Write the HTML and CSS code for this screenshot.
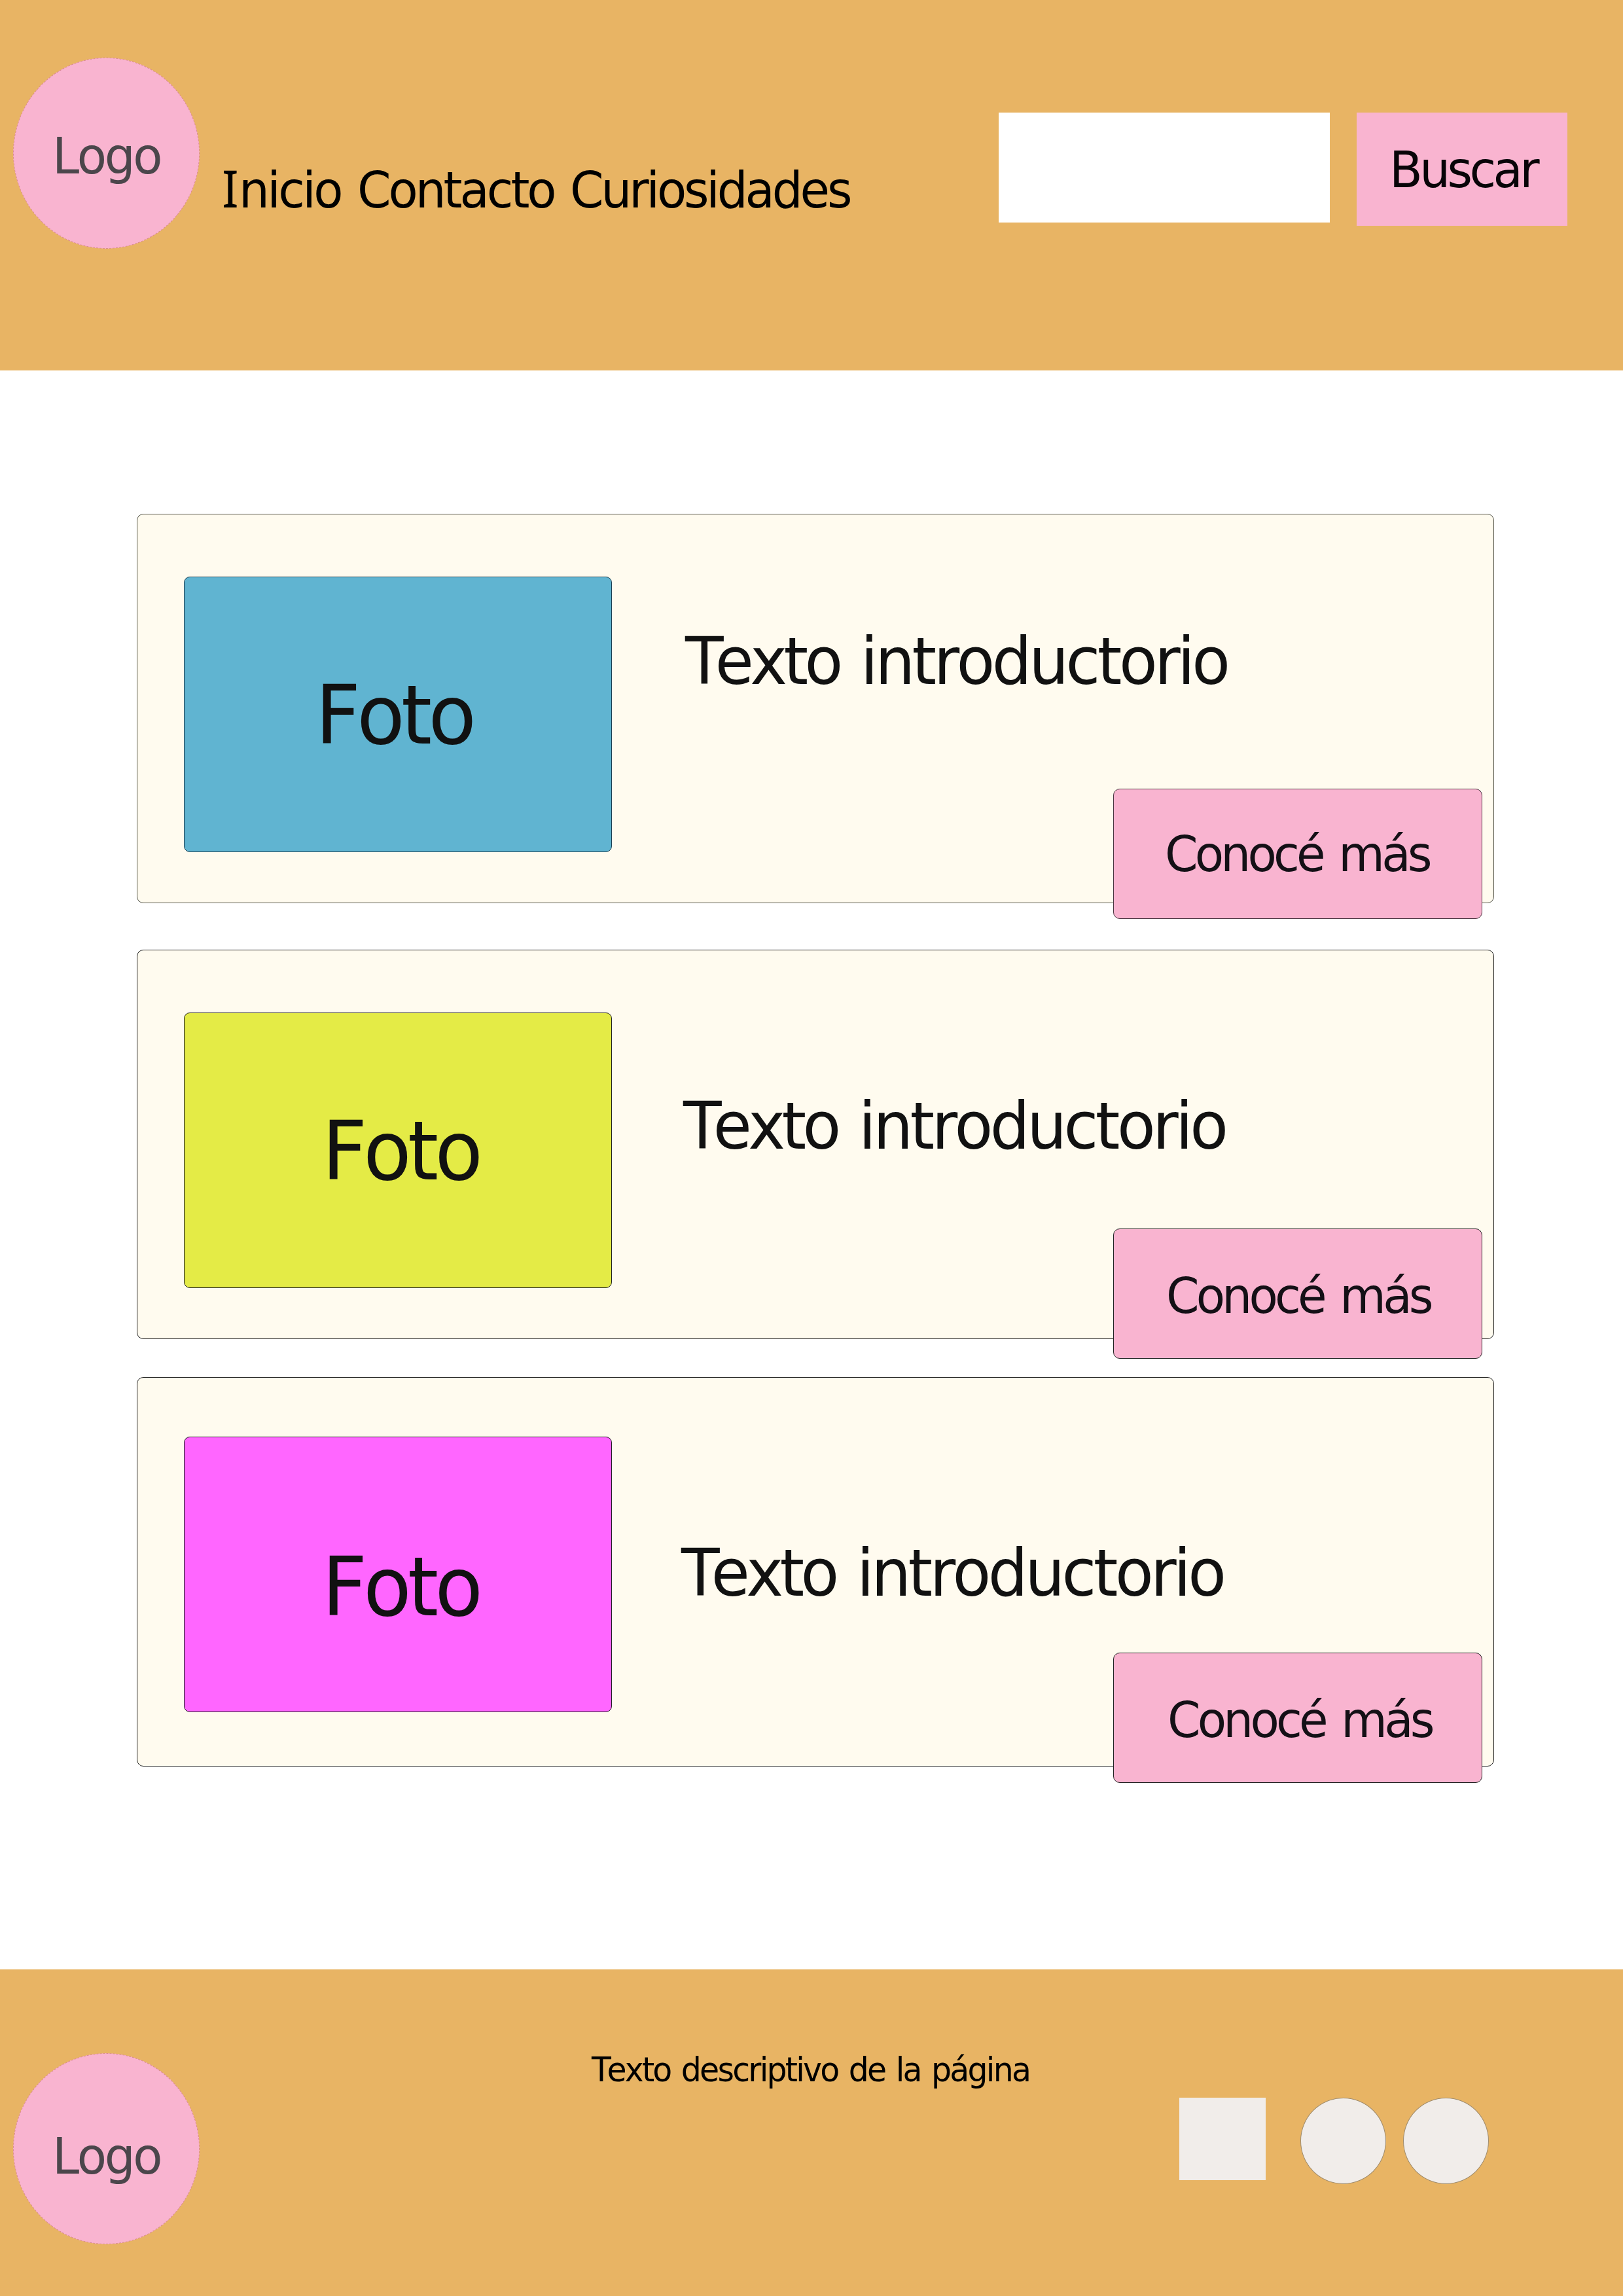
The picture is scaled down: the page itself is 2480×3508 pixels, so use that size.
FILE: index.html
```html
<!DOCTYPE html>
<html lang="es">
<head>
<meta charset="utf-8">
<title>Inicio</title>
<link rel="stylesheet" href="styles.css">
</head>
<body>
<header class="header">
  <div class="logo"><span class="narrow">Logo</span></div>
  <nav class="nav">
    <a class="nav-link nav-link-short narrow"><span class="serif-i">I</span>nicio</a>
    <a class="nav-link narrow">Contacto</a>
    <a class="nav-link nav-link-long narrow">Curiosidades</a>
  </nav>
  <form class="search">
    <input class="search-field" type="text" aria-label="Buscar">
    <button class="search-button" type="button"><span class="narrow">Buscar</span></button>
  </form>
</header>
<main class="main">
  <article class="card card-first">
    <div class="photo photo-blue"><span class="narrow">Foto</span></div>
    <p class="intro narrow"><span class="lead">Texto</span> introductorio</p>
    <a class="more"><span class="narrow">Conocé más</span></a>
  </article>
  <article class="card card-second">
    <div class="photo photo-yellow"><span class="narrow">Foto</span></div>
    <p class="intro narrow"><span class="lead">Texto</span> introductorio</p>
    <a class="more"><span class="narrow">Conocé más</span></a>
  </article>
  <article class="card card-third">
    <div class="photo photo-magenta"><span class="narrow">Foto</span></div>
    <p class="intro narrow"><span class="lead">Texto</span> introductorio</p>
    <a class="more"><span class="narrow">Conocé más</span></a>
  </article>
</main>
<footer class="footer">
  <div class="logo logo-footer"><span class="narrow">Logo</span></div>
  <p class="description narrow">Texto descriptivo de la página</p>
  <div class="social">
    <span class="social-square"></span>
    <span class="social-circle"></span>
    <span class="social-circle"></span>
  </div>
</footer>
</body>
</html>
```
FILE: styles.css
```css
* {
  box-sizing: border-box;
}

body {
  margin: 0;
  width: 2480px;
  height: 3508px;
  display: flex;
  flex-direction: column;
  background: #fff;
  color: #111;
  font-family: "DejaVu Sans", sans-serif;
  font-kerning: none;
  line-height: 1;
  white-space: nowrap;
}

p {
  margin: 0;
}

/* Slightly condensed lettering, used for every text on the page. */
.narrow {
  display: inline-block;
  transform: scaleX(0.96);
  transform-origin: left center;
}

.header {
  display: flex;
  align-items: flex-start;
  height: 566px;
  padding: 88px 85px 0 20px;
  background: #e8b464;
}

.logo {
  width: 285px;
  height: 292px;
  padding: 111px 0 0 59px;
  border: 1px dashed #d98a95;
  border-radius: 50%;
  background: #f9b4d0;
  color: #4b464b;
  font-size: 77px;
  letter-spacing: -3.5px;
}

.nav {
  display: flex;
  margin: 164px 0 0 34px;
  color: #000;
  font-size: 77px;
  letter-spacing: -4.2px;
}

.nav-link {
  width: 324.5px;
}

.nav-link-short {
  width: 207px;
  letter-spacing: -3.75px;
}

.nav-link-long {
  width: 430px;
  letter-spacing: -4.3px;
}

.serif-i {
  font-family: "Noto Sans", sans-serif;
  font-size: 79px;
  line-height: 0;
  letter-spacing: 0.4px;
}

.search {
  display: flex;
  align-items: flex-start;
  gap: 41px;
  margin: 84px 0 0 auto;
}

.search-field {
  width: 506px;
  height: 168px;
  padding: 0 20px;
  border: 0;
  background: #fff;
  font: inherit;
  font-size: 77px;
}

.search-button {
  width: 322px;
  height: 173px;
  padding: 2px 0 0 50px;
  border: 0;
  background: #f9b4d0;
  color: #080408;
  font: inherit;
  font-size: 77px;
  letter-spacing: -4.75px;
  text-align: left;
}

.main {
  flex: 1;
  padding: 219px 197px 0 209px;
}

.card {
  position: relative;
  display: flex;
  align-items: flex-start;
  height: 595px;
  border: 1px solid #55554a;
  border-radius: 10px;
  background: #fffbef;
}

.card-second {
  margin-top: 71px;
  border-color: #222;
}

.card-third {
  margin-top: 58px;
  border-color: #222;
}

.photo {
  width: 654px;
  height: 421px;
  margin: 95px 0 0 71px;
  padding: 148px 0 0 200px;
  border: 1px solid #222;
  border-radius: 9px;
  font-size: 125px;
  letter-spacing: -5.9px;
}

.photo-blue {
  border-color: #1d3f50;
  background: #60b4d1;
}

.photo-yellow {
  padding: 148px 0 0 210px;
  background: #e4eb46;
}

.photo-magenta {
  margin-top: 90px;
  padding: 166px 0 0 210px;
  background: #ff66ff;
}

.intro {
  margin: 175px 0 0 112px;
  font-size: 100px;
  letter-spacing: -4.7px;
  word-spacing: 6.5px;
}

.lead {
  letter-spacing: -5.8px;
}

.intro::first-letter {
  letter-spacing: -13.4px;
}

.card-second .intro {
  margin: 219px 0 0 109px;
}

.card-third .intro {
  margin: 249px 0 0 106px;
}

/* The link hangs over the lower edge of its card. */
.more {
  position: absolute;
  right: 17px;
  bottom: -25px;
  width: 564px;
  height: 199px;
  padding: 62px 0 0 78px;
  border: 1px solid #222;
  border-radius: 10px;
  background: #f9b4d0;
  color: #141016;
  font-size: 75.5px;
  letter-spacing: -5px;
  word-spacing: 6.5px;
}

.card-first .more {
  border-color: #4a3540;
}

.card-second .more {
  bottom: -31px;
  padding: 65px 0 0 80px;
}

.card-third .more {
  bottom: -26px;
  padding: 65px 0 0 82px;
}

.footer {
  display: flex;
  align-items: flex-start;
  height: 499px;
  padding: 128px 205px 0 20px;
  background: #e8b464;
}

.logo-footer {
  padding-top: 118px;
}

.description {
  margin: 0 0 0 599px;
  color: #000;
  font-size: 51px;
  letter-spacing: -2.9px;
  word-spacing: 3.7px;
}

.description::first-letter {
  letter-spacing: -6.8px;
}

.social {
  display: flex;
  align-items: flex-start;
  margin: 68px 0 0 auto;
}

.social-square {
  width: 132px;
  height: 126px;
  margin-right: 53px;
  background: #f1edea;
}

.social-circle {
  width: 131px;
  height: 132px;
  border: 1px solid #a08c6c;
  border-radius: 50%;
  background: #f1edea;
}

.social-circle + .social-circle {
  margin-left: 26px;
}
```
